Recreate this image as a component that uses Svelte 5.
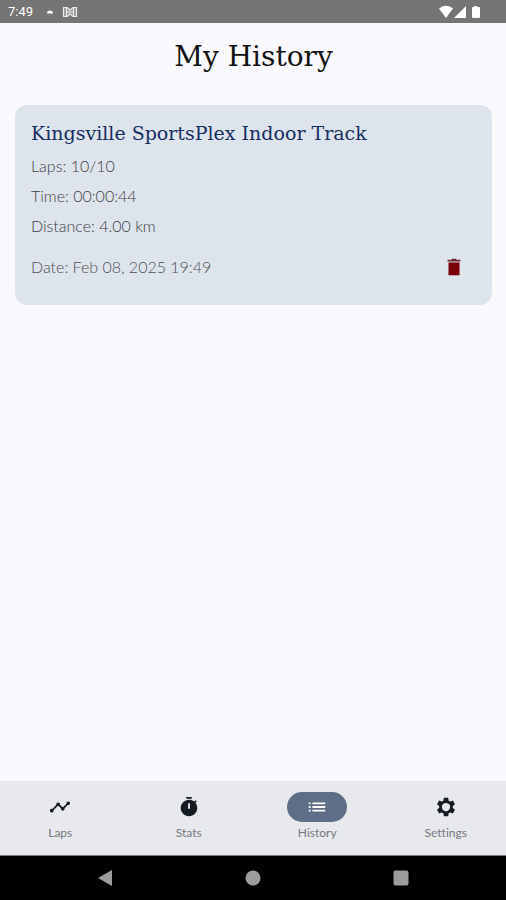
<script>
  const session = {
    place: 'Kingsville SportsPlex Indoor Track',
    stats: ['Laps: 10/10', 'Time: 00:00:44', 'Distance: 4.00 km'],
    date: 'Date: Feb 08, 2025 19:49'
  };

  const tabs = [
    {
      label: 'Laps',
      path: 'M23 8c0 1.1-.9 2-2 2-.18 0-.35-.02-.51-.07l-3.56 3.55c.05.16.07.34.07.52 0 1.1-.9 2-2 2s-2-.9-2-2c0-.18.02-.36.07-.52l-2.55-2.55c-.16.05-.34.07-.52.07s-.36-.02-.52-.07l-4.55 4.56c.05.16.07.33.07.51 0 1.1-.9 2-2 2s-2-.9-2-2 .9-2 2-2c.18 0 .35.02.51.07l4.56-4.55C8.02 9.36 8 9.18 8 9c0-1.1.9-2 2-2s2 .9 2 2c0 .18-.02.36-.07.52l2.55 2.55c.16-.05.34-.07.52-.07s.36.02.52.07l3.55-3.56C19.02 8.35 19 8.18 19 8c0-1.1.9-2 2-2s2 .9 2 2z'
    },
    {
      label: 'Stats',
      path: 'M15 1H9v2h6V1zm4.03 6.39l1.42-1.42c-.43-.51-.9-.99-1.41-1.41l-1.42 1.42C16.07 4.74 14.12 4 12 4c-4.97 0-9 4.03-9 9s4.02 9 9 9 9-4.03 9-9c0-2.12-.74-4.07-1.97-5.61zM13 14h-2V8h2v6z'
    },
    {
      label: 'History',
      path: 'M3 13h2v-2H3v2zm0 4h2v-2H3v2zm0-8h2V7H3v2zm4 4h14v-2H7v2zm0 4h14v-2H7v2zM7 7v2h14V7H7z'
    },
    {
      label: 'Settings',
      path: 'M19.43 12.98c.04-.32.07-.64.07-.98s-.03-.66-.07-.98l2.11-1.65c.19-.15.24-.42.12-.64l-2-3.46c-.12-.22-.39-.3-.61-.22l-2.49 1c-.52-.4-1.08-.73-1.69-.98l-.38-2.65C14.46 2.18 14.25 2 14 2h-4c-.25 0-.46.18-.49.42l-.38 2.65c-.61.25-1.17.59-1.69.98l-2.49-1c-.23-.09-.49 0-.61.22l-2 3.46c-.13.22-.07.49.12.64l2.11 1.65c-.04.32-.07.65-.07.98s.03.66.07.98l-2.11 1.65c-.19.15-.24.42-.12.64l2 3.46c.12.22.39.3.61.22l2.49-1c.52.4 1.08.73 1.69.98l.38 2.65c.03.24.24.42.49.42h4c.25 0 .46-.18.49-.42l.38-2.65c.61-.25 1.17-.59 1.69-.98l2.49 1c.23.09.49 0 .61-.22l2-3.46c.12-.22.07-.49-.12-.64l-2.11-1.65zM12 16.5a4.5 4.5 0 1 1 0-9 4.5 4.5 0 0 1 0 9z'
    }
  ];

  let active = $state('History');
</script>

<div class="screen">
  <div class="status">
    <span class="clock">7:49</span>
    <svg class="dot" width="8" height="12" viewBox="0 0 8 12"><path d="M1 7.500a3 3 0 0 1 6 0z" fill="#fff" /></svg>
    <svg class="mail" width="16" height="12" viewBox="0 0 16 12">
      <path d="M1.500 1.500H5l3 2.500 3-2.500h3.500v9H11L8 8l-3 2.500H1.500z" fill="#999" stroke="#eee" stroke-width="1.200" />
      <path d="M4.500 2v8M11.500 2v8" stroke="#eee" />
      <path d="M5 6h6" stroke="#eee" />
    </svg>
    <svg class="signals" width="44" height="14" viewBox="0 0 44 14">
      <g fill="#fff">
        <path d="M1 3.500a10.500 10.500 0 0 1 14 0L8 13z" />
        <path d="M28 1v12H16z" />
        <path d="M36 1h3v1h2q1 0 1 1v9q0 1-1 1h-6q-1 0-1-1V3q0-1 1-1h1z" />
      </g>
    </svg>
  </div>

  <main>
    <h1>My History</h1>
    <article>
      <h2>{session.place}</h2>
      {#each session.stats as line}
        <p>{line}</p>
      {/each}
      <div class="foot">
        <p class="date">{session.date}</p>
        <button class="delete" aria-label="Delete session">
          <svg width="22" height="22" viewBox="0 0 24 24">
            <path d="M6 7h12v14H6z" fill="#780006" />
            <path d="M5 4h4l1-1h4l1 1h4v2H5z" fill="#6d2830" />
          </svg>
        </button>
      </div>
    </article>
  </main>

  <nav class="tabs">
    {#each tabs as tab}
      <button class="tab" class:active={active === tab.label} onclick={() => (active = tab.label)}>
        <span class="pill">
          <svg width="22" height="22" viewBox="0 0 24 24"><path d={tab.path} fill="currentColor" /></svg>
        </span>
        <span>{tab.label}</span>
      </button>
    {/each}
  </nav>

  <div class="system">
    <button aria-label="Back"><svg width="16" height="16" viewBox="0 0 16 16"><path d="M15 0v16L1 8z" fill="#9c9c9c" /></svg></button>
    <button aria-label="Home"><svg width="16" height="16" viewBox="0 0 16 16"><circle cx="8" cy="8" r="7.500" fill="#9c9c9c" /></svg></button>
    <button aria-label="Recents"><svg width="16" height="16" viewBox="0 0 16 16"><rect width="15" height="15" x="0.500" y="0.500" rx="2" fill="#9c9c9c" /></svg></button>
  </div>
</div>

<style>
  :global(body) {
    margin: 0;
  }
  .screen {
    min-height: 100vh;
    display: flex;
    flex-direction: column;
    background: #f9f9fe;
    font-family: Lato, sans-serif;
    font-variant-ligatures: none;
  }
  button {
    border: 0;
    padding: 0;
    background: none;
    font: inherit;
    font-variant-ligatures: none;
    cursor: pointer;
  }
  svg {
    display: block;
  }
  .status {
    height: 23px;
    padding: 0 24px 0 8px;
    display: flex;
    align-items: center;
    background: #757575;
    color: #fff;
  }
  .clock {
    font: 13px/24px Roboto, sans-serif;
  }
  .dot {
    margin-left: 13px;
  }
  .mail {
    margin-left: 8px;
  }
  .signals {
    margin-left: auto;
  }
  main {
    flex: 1;
    padding: 12px 14px 0 15px;
  }
  h1,
  h2 {
    margin: 0;
    font-family: 'DejaVu Serif', serif;
    font-weight: 400;
  }
  h1 {
    font-size: 28px;
    line-height: 44px;
    text-align: center;
    color: #111;
  }
  article {
    margin-top: 26px;
    padding: 12px 16px;
    border-radius: 12px;
    background: #dee4eb;
  }
  h2 {
    font-size: 19px;
    line-height: 32px;
    padding-bottom: 2px;
    color: #152e62;
  }
  p {
    margin: 0;
    font-size: 16px;
    font-weight: 300;
    line-height: 30px;
    color: #3c4046;
  }
  .foot {
    display: flex;
    align-items: center;
    justify-content: space-between;
    height: 52px;
  }
  .date {
    color: #4c5056;
  }
  .delete {
    width: 44px;
    height: 44px;
    display: grid;
    place-items: center;
  }
  .tabs {
    display: flex;
    gap: 8px;
    height: 75px;
    background: #e7e9ed;
    border-bottom: 1px solid #777;
    box-sizing: border-box;
  }
  .tab {
    flex: 1;
    display: flex;
    flex-direction: column;
    align-items: center;
    padding-top: 11px;
    font-size: 12px;
    line-height: 22px;
    color: #74777c;
  }
  .pill {
    width: 60px;
    height: 30px;
    border-radius: 15px;
    display: grid;
    place-items: center;
    color: #151c24;
  }
  .active .pill {
    background: #5e6e86;
    color: #fff;
  }
  .system {
    height: 44px;
    display: flex;
    align-items: center;
    justify-content: center;
    gap: 132px;
    background: #000;
  }
</style>
